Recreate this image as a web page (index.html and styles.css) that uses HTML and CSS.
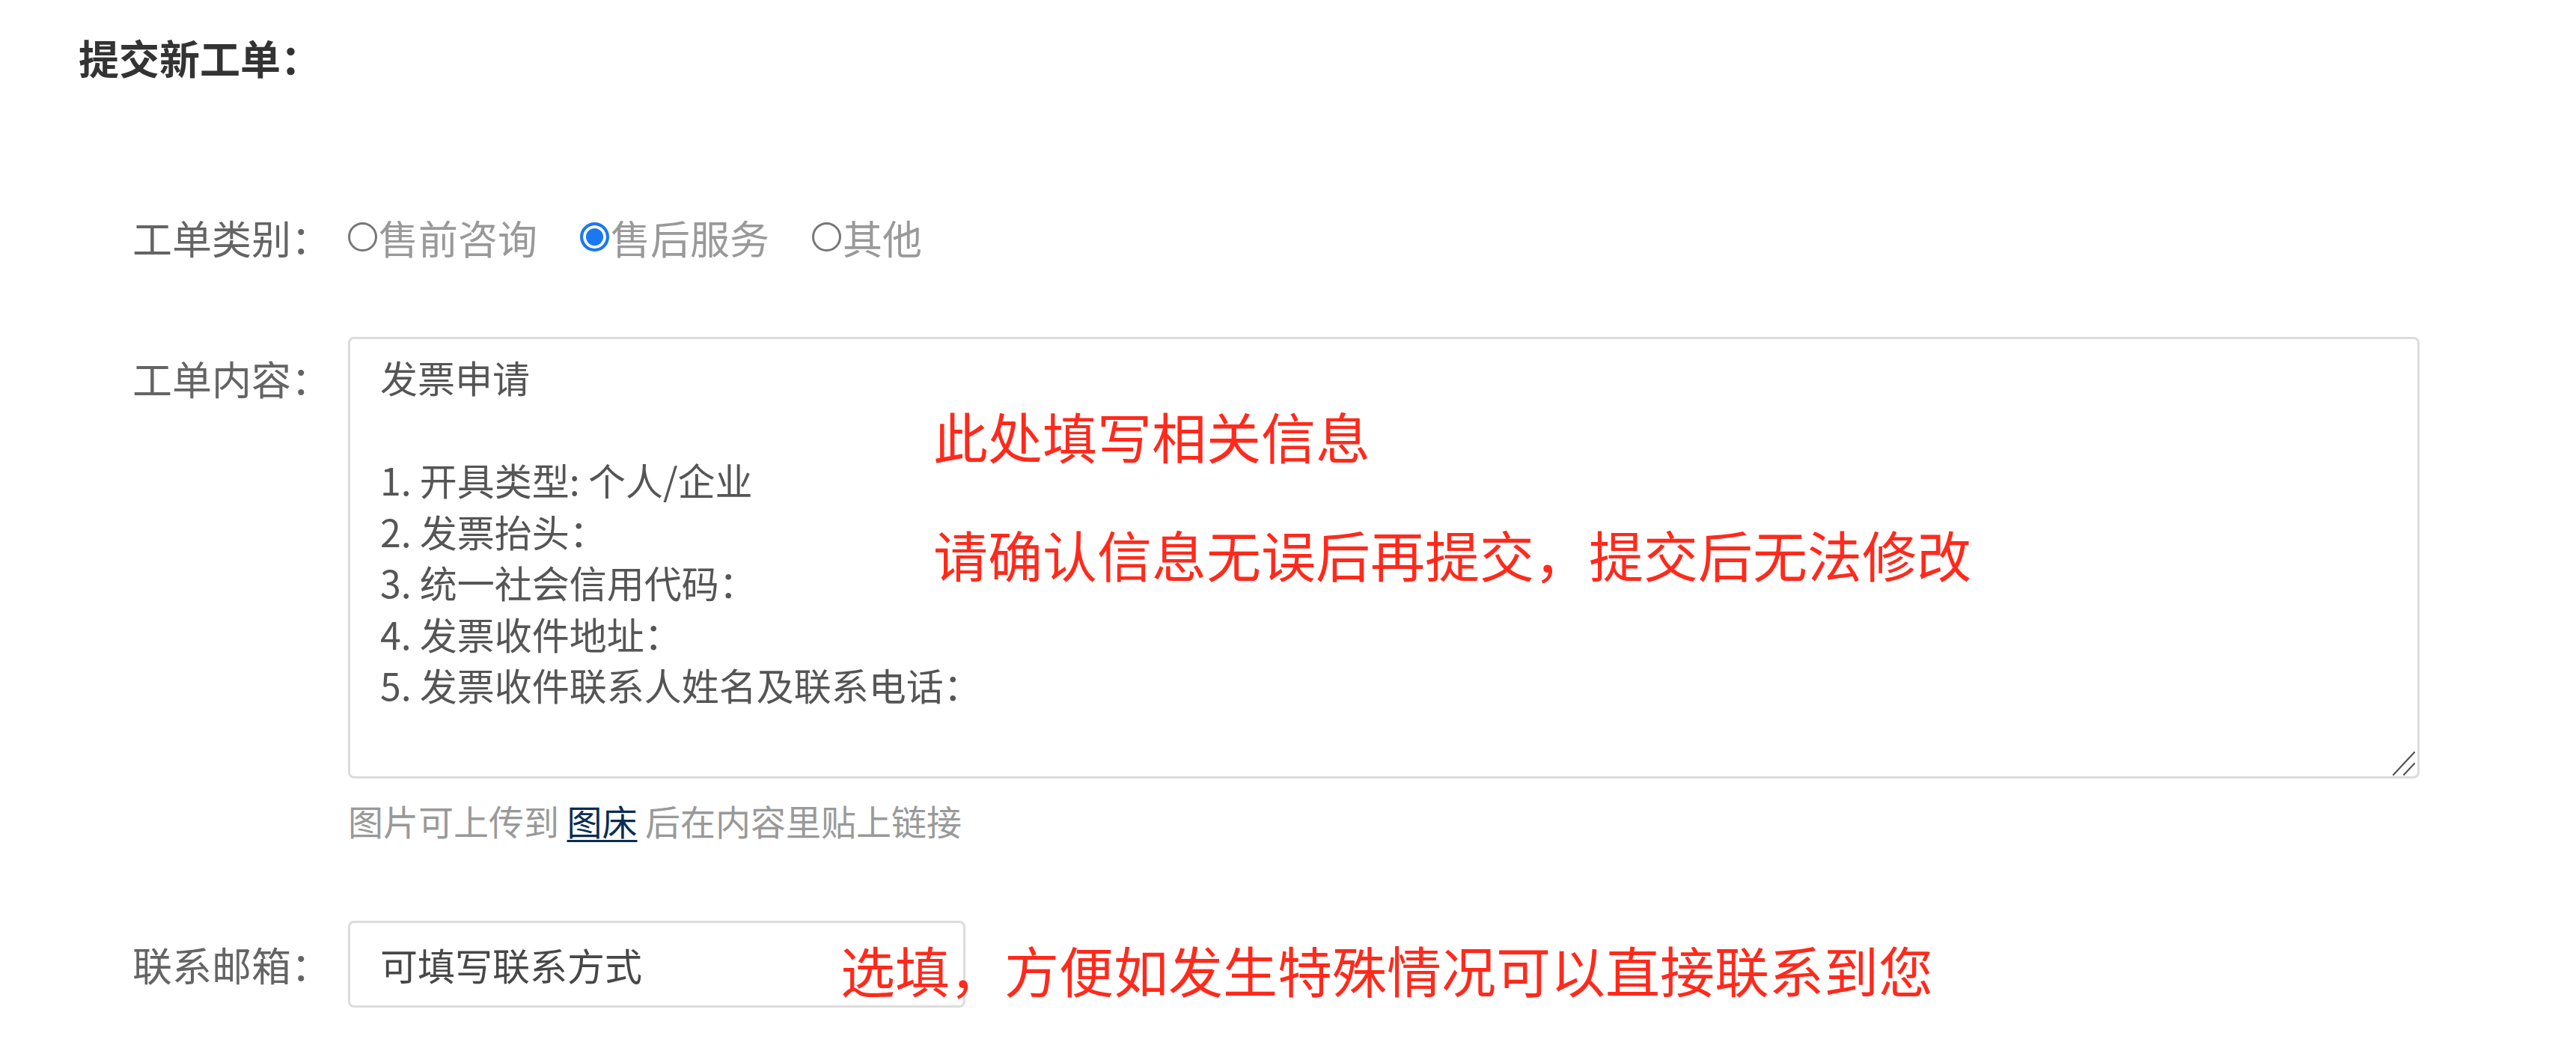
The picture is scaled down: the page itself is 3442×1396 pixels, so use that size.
FILE: index.html
```html
<!DOCTYPE html>
<html lang="zh-CN">
<head>
<meta charset="utf-8">
<title>提交新工单</title>
<link rel="stylesheet" href="styles.css">
</head>
<body>
<div class="page">
  <h2 class="title">提交新工单：</h2>
  <form class="form">
    <div class="row row-type">
      <span class="label">工单类别：</span>
      <div class="radios">
        <label class="option"><input class="radio" type="radio" name="type"><span>售前咨询</span></label>
        <label class="option"><input class="radio" type="radio" name="type" checked><span>售后服务</span></label>
        <label class="option"><input class="radio" type="radio" name="type"><span>其他</span></label>
      </div>
    </div>
    <div class="row row-content">
      <span class="label label-top">工单内容：</span>
      <div class="field">
        <div class="area-wrap">
          <textarea class="area">发票申请

1. 开具类型: 个人/企业
2. 发票抬头：
3. 统一社会信用代码：
4. 发票收件地址：
5. 发票收件联系人姓名及联系电话：</textarea>
          <svg class="grip" width="32" height="34" viewBox="0 0 32 34" aria-hidden="true">
            <line x1="2" y1="32" x2="30" y2="2" stroke="#555" stroke-width="2.2" stroke-linecap="round"/>
            <line x1="16" y1="32" x2="30" y2="17" stroke="#555" stroke-width="2.2" stroke-linecap="round"/>
          </svg>
          <div class="note note-area">
            <span>此处填写相关信息</span>
            <span>请确认信息无误后再提交，提交后无法修改</span>
          </div>
        </div>
        <p class="help">图片可上传到 <a class="link" href="#">图床</a> 后在内容里贴上链接</p>
      </div>
    </div>
    <div class="row row-email">
      <span class="label">联系邮箱：</span>
      <div class="email-field">
        <input class="input" type="text" placeholder="可填写联系方式">
        <span class="note note-email">选填，方便如发生特殊情况可以直接联系到您</span>
      </div>
    </div>
  </form>
</div>
</body>
</html>
```
FILE: styles.css
```css
* { box-sizing: border-box; }

html, body {
  margin: 0;
  background: #fff;
  font-family: "Noto Sans CJK SC", "Noto Sans", sans-serif;
}

.page {
  padding: 39px 0 0 105px;
}

.title {
  margin: 0;
  font-size: 54px;
  line-height: 76px;
  font-weight: 700;
  color: #333;
}

.form {
  margin-top: 165px;
  padding-left: 72px;
}

.row {
  display: flex;
}

.label {
  flex: 0 0 288px;
  font-size: 53px;
  line-height: 74px;
  color: #646464;
  white-space: nowrap;
}

.row-type {
  align-items: center;
}

.radios {
  display: flex;
  align-items: center;
  gap: 57px;
}

.option {
  display: inline-flex;
  align-items: center;
  gap: 2px;
  font-size: 53px;
  line-height: 74px;
  color: #999;
}

.radio {
  appearance: none;
  -webkit-appearance: none;
  margin: 0;
  width: 39px;
  height: 39px;
  border: 3px solid #777;
  border-radius: 50%;
  background: #fff;
  position: relative;
  top: -1px;
}

.radio:checked {
  border: 4px solid #1a78f2;
  background: #1a78f2;
  box-shadow: inset 0 0 0 4px #fff;
}

.row-content {
  margin-top: 96px;
  align-items: flex-start;
}

.label-top {
  margin-top: 18px;
}

.field {
  display: flex;
  flex-direction: column;
}

.area-wrap {
  position: relative;
  width: 2768px;
  height: 590px;
}

.area {
  display: block;
  width: 100%;
  height: 100%;
  margin: 0;
  padding: 16px 40px;
  border: 3px solid #dcdcdc;
  border-radius: 8px;
  font-family: inherit;
  font-size: 50px;
  line-height: 68.5px;
  color: #555;
  background: #fff;
  outline: none;
  resize: none;
}

.grip {
  position: absolute;
  right: 5px;
  bottom: 3px;
  pointer-events: none;
}

.note {
  position: absolute;
  color: #ff2a1c;
  font-size: 73px;
  line-height: 73px;
  white-space: nowrap;
  pointer-events: none;
}

.note-area {
  left: 782px;
  top: 95px;
  display: flex;
  flex-direction: column;
  gap: 85px;
}

.help {
  margin: 23px 0 0;
  font-size: 47px;
  line-height: 66px;
  color: #999;
  white-space: nowrap;
}

.link {
  color: #0b2d50;
  text-decoration: underline;
  text-underline-offset: 6px;
  text-decoration-thickness: 3px;
}

.row-email {
  margin-top: 101px;
  align-items: center;
}

.email-field {
  position: relative;
}

.input {
  display: block;
  width: 825px;
  height: 116px;
  margin: 0;
  padding: 0 40px;
  border: 3px solid #dcdcdc;
  border-radius: 8px;
  font-family: inherit;
  font-size: 50px;
  color: #444;
  background: #fff;
  outline: none;
}

.input::placeholder {
  color: #474747;
  opacity: 1;
}

.note-email {
  left: 658px;
  top: 28px;
}
```
